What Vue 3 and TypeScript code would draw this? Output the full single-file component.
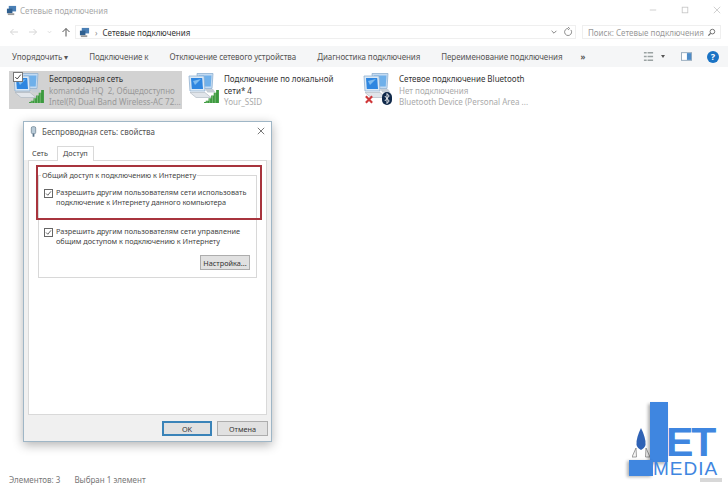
<template>
  <div class="window">
    <!-- title bar -->
    <div class="titlebar">
      <svg class="net-small" viewBox="0 0 12 12"><rect x="3" y="1" width="8" height="6" fill="#4a7fb5" /><rect x="1" y="4" width="6" height="5" fill="#2f5f8f" /><rect x="2" y="9" width="7" height="2" fill="#9a9a9a" /></svg>
      <span class="title">Сетевые подключения</span>
      <div class="win-btns">
        <svg viewBox="0 0 10 10"><path d="M1 5h8" stroke="#c4c4c4" /></svg>
        <svg viewBox="0 0 10 10"><rect x="1.5" y="1.5" width="7" height="7" fill="none" stroke="#c4c4c4" /></svg>
        <svg viewBox="0 0 10 10"><path d="M1 1l8 8M9 1l-8 8" stroke="#c4c4c4" /></svg>
      </div>
    </div>

    <!-- address row -->
    <div class="addressrow">
      <div class="nav">
        <svg viewBox="0 0 10 10"><path d="M9 5H1.5M4.5 2L1.5 5l3 3" fill="none" stroke="#d6d6d6" /></svg>
        <svg viewBox="0 0 10 10"><path d="M1 5h7.5M5.5 2l3 3-3 3" fill="none" stroke="#d6d6d6" /></svg>
        <svg class="tiny" viewBox="0 0 6 10"><path d="M1 4l2 2 2-2" fill="none" stroke="#d6d6d6" /></svg>
        <svg viewBox="0 0 10 10"><path d="M5 9.5V1.5M1.5 5L5 1.5 8.5 5" fill="none" stroke="#555" /></svg>
      </div>
      <div class="address">
        <svg class="net-small" viewBox="0 0 12 12"><rect x="3" y="1" width="8" height="6" fill="#4a7fb5" /><rect x="1" y="4" width="6" height="5" fill="#2f5f8f" /><rect x="2" y="9" width="7" height="2" fill="#9a9a9a" /></svg>
        <span class="crumb-arrow">›</span>
        <span>Сетевые подключения</span>
        <svg class="addr-drop" viewBox="0 0 10 10"><path d="M2 3.5L5 6.5 8 3.5" fill="none" stroke="#666" /></svg>
        <svg class="addr-refresh" viewBox="0 0 12 12"><path d="M9.5 3.5A4.2 4.2 0 1 1 6 1.8M6 0l2 1.8L6 3.6" fill="none" stroke="#777" /></svg>
      </div>
      <div class="search">
        <span>Поиск: Сетевые подключения</span>
        <svg viewBox="0 0 10 10"><circle cx="6" cy="4" r="2.6" fill="none" stroke="#666" /><path d="M4 6L1.5 8.5" stroke="#666" stroke-width="1.4" /></svg>
      </div>
    </div>

    <!-- toolbar -->
    <div class="toolbar">
      <span v-for="cmd in commands" :key="cmd" class="cmd">{{ cmd }}</span>
      <span class="more">»</span>
      <div class="tool-icons">
        <svg class="view-icon" viewBox="0 0 12 12"><path d="M1 2h3M5 2h6M1 6h3M5 6h6M1 10h3M5 10h6" stroke="#9aa2a2" stroke-width="1.6" /></svg>
        <span class="caret"></span>
        <svg class="pane-icon" viewBox="0 0 13 10"><rect x="0.5" y="0.5" width="12" height="9" fill="#fff" stroke="#8aa0b5" /><rect x="7" y="1" width="5" height="8" fill="#4d8cc8" /></svg>
        <span class="help">?</span>
      </div>
    </div>

    <!-- connections -->
    <div class="items">
      <div v-for="item in connections" :key="item.name[0]" class="item" :class="{ selected: item.selected }">
        <div class="item-icon">
          <svg viewBox="0 0 34 34" width="34" height="34">
            <path d="M10 1.5h16l-1 15H11z" fill="#c4dbf2" stroke="#8fb0d0" stroke-width="0.8" />
            <path d="M12 3.5h12.5l-.8 11H13z" fill="#6fb0ea" />
            <path d="M2 4h15l1 15H3z" fill="#dbe9f6" stroke="#8fb0d0" stroke-width="0.8" />
            <path d="M4 6h11.2l.8 11H4.8z" fill="#2e86e0" />
            <path d="M6 9l8-2-6 6z" fill="#7fbcf0" />
            <path d="M3 20.5h15l6 5H9z" fill="#e1e5ea" stroke="#a8b2bc" stroke-width="0.6" />
            <path d="M18 17h8l2.5 3.5h-8z" fill="#c6ced6" />
          </svg>
          <svg v-if="item.kind === 'wifi'" class="bars" viewBox="0 0 16 14">
            <path d="M0 14h16V0h-3v3h-.4V3h-2.2v3H10V6H7.6v3H7V9H4.8v2.500H4V11.500H1.800V13H0z" fill="#3c9a3f" />
            <path d="M3.200 11v3M6 9v5M9 6v8M12 3v11" stroke="#b6dcae" stroke-width="0.5" />
          </svg>
          <svg v-else class="cross" viewBox="0 0 10 10"><path d="M1.500 1.500l7 7M8.500 1.500l-7 7" stroke="#d0383a" stroke-width="2.400" /></svg>
          <svg v-if="item.kind === 'bt'" class="bt" viewBox="0 0 10 13">
            <rect x="0" y="0" width="10" height="13" rx="5" fill="#10294a" />
            <path d="M2.800 4l4.400 5L5 11.500v-10L7.200 4 2.800 9" fill="none" stroke="#fff" stroke-width="0.9" />
          </svg>
          <span v-if="item.selected" class="tick">
            <svg viewBox="0 0 10 10"><path d="M1.500 5l2.500 2.500 4.500-5.500" fill="none" stroke="#333" stroke-width="1.100" /></svg>
          </span>
        </div>
        <div class="item-text">
          <div v-for="line in item.name" :key="line" class="item-name">{{ line }}</div>
          <div v-for="line in item.info" :key="line" class="item-info">{{ line }}</div>
        </div>
      </div>
    </div>

    <div class="statusbar">
      <span>Элементов: 3</span>
      <span>Выбран 1 элемент</span>
    </div>

    <!-- properties dialog -->
    <div class="dialog">
      <div class="dlg-title">
        <svg viewBox="0 0 8 12"><rect x="1.500" y="0.500" width="5" height="8" rx="1.500" fill="#b9cbd8" stroke="#7c8f9e" /><path d="M4 8.500V12" stroke="#58738a" stroke-width="2" /></svg>
        <span>Беспроводная сеть: свойства</span>
        <svg class="dlg-close" viewBox="0 0 10 10"><path d="M1 1l8 8M9 1l-8 8" stroke="#555" /></svg>
      </div>
      <div class="tabs">
        <span class="tab">Сеть</span>
        <span class="tab active">Доступ</span>
      </div>
      <div class="panel">
        <fieldset class="group">
          <legend>Общий доступ к подключению к Интернету</legend>
          <label class="check">
            <span class="box"><svg viewBox="0 0 10 10"><path d="M1.500 5l2.500 2.500 4.500-5.500" fill="none" stroke="#333" stroke-width="1.100" /></svg></span>
            <span>Разрешить другим пользователям сети использовать<br />подключение к Интернету данного компьютера</span>
          </label>
          <label class="check second">
            <span class="box"><svg viewBox="0 0 10 10"><path d="M1.500 5l2.500 2.500 4.500-5.500" fill="none" stroke="#333" stroke-width="1.100" /></svg></span>
            <span>Разрешить другим пользователям сети управление<br />общим доступом к подключению к Интернету</span>
          </label>
          <div class="setup-row"><button class="btn setup">Настройка...</button></div>
        </fieldset>
      </div>
      <div class="dlg-actions">
        <button class="btn ok">OK</button>
        <button class="btn">Отмена</button>
      </div>
      <div class="redbox"></div>
    </div>

    <!-- watermark -->
    <div class="logo">
      <svg class="rocket" viewBox="0 0 18 30">
        <path d="M4 20L0 29h4.500zM14 20l4 9h-4.500z" fill="#f6f6f6" stroke="#777" stroke-width="0.7" />
        <path d="M9 0C6 6 4 12 4.500 17c.5 2 2.500 4 4.500 5 2-1 4-3 4.500-5C14 12 12 6 9 0z" fill="#2f62b5" />
      </svg>
      <div class="logo-j"></div>
      <div class="logo-foot"></div>
      <span class="logo-et">ET</span>
      <span class="logo-media">MEDIA</span>
      <div class="logo-mark"></div>
    </div>
  </div>
</template>

<script setup lang="ts">
interface Connection {
  name: string[]
  info: string[]
  kind: 'wifi' | 'bt' | 'off'
  selected?: boolean
}

const commands: string[] = [
  'Упорядочить ▾',
  'Подключение к',
  'Отключение сетевого устройства',
  'Диагностика подключения',
  'Переименование подключения',
]

const connections: Connection[] = [
  {
    name: ['Беспроводная сеть'],
    info: ['komandda HQ  2, Общедоступно', 'Intel(R) Dual Band Wireless-AC 72...'],
    kind: 'wifi',
    selected: true,
  },
  {
    name: ['Подключение по локальной', 'сети* 4'],
    info: ['Your_SSID'],
    kind: 'wifi',
  },
  {
    name: ['Сетевое подключение Bluetooth'],
    info: ['Нет подключения', 'Bluetooth Device (Personal Area ...'],
    kind: 'bt',
  },
]
</script>

<style>
html,
body {
  margin: 0;
  background: #fff;
}
</style>

<style scoped>
.window {
  position: relative;
  width: 728px;
  height: 487px;
  overflow: hidden;
  background: #fff;
  font-family: "Noto Sans", "Liberation Sans", sans-serif;
  font-size: 8px;
  color: #333;
  display: flex;
  flex-direction: column;
}

.titlebar {
  height: 20px;
  display: flex;
  align-items: center;
  padding: 0 6px;
  gap: 3px;
  color: #a8a8a8;
}
.net-small {
  width: 11px;
  height: 11px;
  flex: none;
}
.win-btns {
  margin-left: auto;
  display: flex;
  gap: 24px;
  padding-right: 1px;
}
.win-btns svg {
  width: 8px;
  height: 8px;
}

.addressrow {
  height: 16px;
  margin-top: 4px;
  display: flex;
  align-items: center;
  padding-left: 9px;
}
.nav {
  display: flex;
  align-items: center;
  gap: 9px;
  width: 66px;
  flex: none;
}
.nav svg {
  width: 10px;
  height: 10px;
}
.nav .tiny {
  width: 5px;
}
.address {
  width: 501px;
  flex: none;
  height: 14px;
  border: 1px solid #efefef;
  box-sizing: border-box;
  display: flex;
  align-items: center;
  gap: 5px;
  padding-left: 3px;
}
.crumb-arrow {
  color: #888;
}
.addr-drop {
  width: 8px;
  height: 8px;
  margin-left: auto;
}
.addr-refresh {
  width: 10px;
  height: 10px;
  margin: 0 2px 0 0;
}
.search {
  width: 139px;
  height: 14px;
  margin-left: 6px;
  box-sizing: border-box;
  border: 1px solid #efefef;
  display: flex;
  align-items: center;
  justify-content: space-between;
  padding: 0 4px 0 5px;
  color: #999;
  white-space: nowrap;
}
.search svg {
  width: 9px;
  height: 9px;
  flex: none;
}

.toolbar {
  height: 21px;
  margin-top: 6px;
  background: #f5f6f7;
  display: flex;
  align-items: center;
  padding-left: 12px;
  gap: 21px;
  color: #555;
}
.cmd {
  letter-spacing: -0.08px;
}
.more {
  margin-left: -3px;
  font-weight: 700;
}
.tool-icons {
  margin-left: auto;
  display: flex;
  align-items: center;
  padding-right: 9px;
}
.view-icon {
  width: 11px;
  height: 11px;
}
.caret {
  width: 0;
  height: 0;
  margin: 0 0 0 7px;
  border: 2.5px solid transparent;
  border-top: 3px solid #555;
  border-bottom: 0;
}
.pane-icon {
  width: 11px;
  height: 9px;
  margin-left: 16px;
}
.help {
  width: 12px;
  height: 12px;
  margin-left: 15px;
  border-radius: 50%;
  background: #1a73c4;
  color: #fff;
  font-weight: 700;
  font-size: 9px;
  line-height: 12px;
  text-align: center;
}

.items {
  display: flex;
  margin-top: 4px;
  padding-left: 9px;
  gap: 2px;
}
.item {
  width: 173px;
  height: 38px;
  display: flex;
}
.item.selected {
  background: #d2d2d2;
}
.item-icon {
  position: relative;
  width: 34px;
  height: 34px;
  margin: 1px 3px 0 3px;
  flex: none;
}
.bars {
  position: absolute;
  right: 2px;
  bottom: 3px;
  width: 15px;
  height: 13px;
}
.cross {
  position: absolute;
  left: 2px;
  bottom: 2px;
  width: 10px;
  height: 9px;
}
.bt {
  position: absolute;
  left: 20px;
  bottom: 1px;
  width: 10px;
  height: 13px;
}
.tick {
  position: absolute;
  left: 1px;
  top: 0;
  width: 8px;
  height: 8px;
  background: #fff;
  border: 1px solid #777;
}
.tick svg {
  display: block;
}
.item-text {
  line-height: 11.5px;
  padding-top: 2px;
  white-space: nowrap;
}
.item-name {
  color: #333;
}
.item-info {
  color: #aaa;
  white-space: pre;
}
.selected .item-info {
  color: #999;
}

.statusbar {
  position: absolute;
  left: 9px;
  bottom: 2px;
  display: flex;
  gap: 14px;
  color: #777;
}

/* floating window */
.dialog {
  position: absolute;
  left: 23px;
  top: 121px;
  width: 249px;
  height: 321px;
  box-sizing: border-box;
  background: #f0f0f0;
  border: 1px solid #9fb6c6;
  box-shadow: 0 3px 10px rgba(0, 0, 0, 0.3);
  display: flex;
  flex-direction: column;
  font-size: 7.3px;
  color: #444;
}
.dlg-title {
  height: 18px;
  background: #fff;
  display: flex;
  align-items: center;
  gap: 5px;
  padding: 0 6px;
  font-size: 8px;
  color: #555;
}
.dlg-title svg {
  width: 7px;
  height: 11px;
}
.dlg-title .dlg-close {
  width: 8px;
  height: 8px;
  margin-left: auto;
}
.tabs {
  height: 20px;
  background: #fff;
  display: flex;
  align-items: flex-end;
  padding-left: 5px;
}
.tab {
  height: 13px;
  line-height: 13px;
  padding: 0 6px 0 3px;
}
.tab.active {
  height: 14px;
  line-height: 12px;
  padding: 0 5px;
  margin-left: 3px;
  margin-bottom: -1px;
  background: #fff;
  border: 1px solid #d9d9d9;
  border-bottom: 0;
  position: relative;
  z-index: 1;
}
.panel {
  margin: 0 4px;
  height: 255px;
  box-sizing: border-box;
  background: #fff;
  border: 1px solid #d9d9d9;
  padding: 9px 9px;
}
.group {
  margin: 0;
  padding: 8px 0 0 5px;
  height: 108px;
  box-sizing: border-box;
  border: 1px solid #d8d8d8;
}
.group legend {
  padding: 0 1px;
  margin-left: -3px;
}
.check {
  display: flex;
  gap: 3px;
  line-height: 9.5px;
}
.second {
  margin-top: 20px;
}
.box {
  width: 9px;
  height: 9px;
  box-sizing: border-box;
  flex: none;
  border: 1px solid #666;
  margin-top: 1px;
}
.box svg {
  display: block;
}
.setup-row {
  display: flex;
  justify-content: flex-end;
  padding: 9px 6px 0 0;
}
.btn {
  font: inherit;
  color: #333;
  background: #e1e1e1;
  border: 1px solid #adadad;
  width: 51px;
  height: 15px;
  padding: 0;
}
.setup {
  width: 50px;
}
.dlg-actions {
  display: flex;
  justify-content: flex-end;
  gap: 5px;
  padding: 6px 3px 0 0;
}
.ok {
  width: 50px;
  border: 2px solid #3a83b8;
}
.redbox {
  position: absolute;
  left: 12px;
  top: 43px;
  width: 226px;
  height: 55px;
  box-sizing: border-box;
  border: 2px solid #a8343d;
}

.logo {
  position: absolute;
  left: 624px;
  top: 401px;
  width: 100px;
  height: 82px;
  font-family: "Liberation Sans", sans-serif;
  color: #3f86e0;
}
.rocket {
  position: absolute;
  left: 8px;
  top: 27px;
  width: 18px;
  height: 30px;
}
.logo-j {
  position: absolute;
  left: 26px;
  top: 1px;
  width: 18px;
  height: 60px;
  background: #3f86e0;
  box-shadow: -2px 2px 3px rgba(0, 0, 0, 0.3);
}
.logo-foot {
  position: absolute;
  left: 5px;
  top: 59px;
  width: 24px;
  height: 16px;
  background: #3f86e0;
  box-shadow: -2px 1px 3px rgba(0, 0, 0, 0.3);
}
.logo-et {
  position: absolute;
  left: 42px;
  top: 26px;
  font-size: 41px;
  line-height: 30px;
  font-weight: 700;
  letter-spacing: -2px;
}
.logo-media {
  position: absolute;
  left: 29px;
  top: 61px;
  font-size: 19px;
  line-height: 13px;
  letter-spacing: 1px;
}
.logo-mark {
  position: absolute;
  left: 76px;
  top: 77px;
  width: 22px;
  height: 4px;
  background: #d8d8d8;
}
</style>
